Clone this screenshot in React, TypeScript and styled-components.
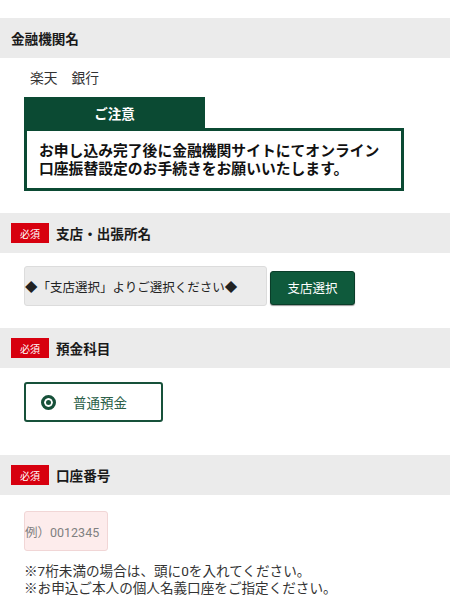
import styled, { createGlobalStyle } from 'styled-components';

const GlobalStyle = createGlobalStyle`
  body {
    margin: 0;
    background: #fff;
    font-family: Roboto, "Noto Sans CJK JP", sans-serif;
    color: #222;
  }
`;

export default function App() {
  return (
    <>
      <GlobalStyle />
      <Page>
        <SectionHead>
          <HeadTitle>金融機関名</HeadTitle>
        </SectionHead>
        <Body $top={13} $bottom={22}>
          <BankName>楽天　銀行</BankName>
          <Notice>
            <NoticeTab>ご注意</NoticeTab>
            <NoticeBox>
              <NoticeLine>お申し込み完了後に金融機関サイトにてオンライン</NoticeLine>
              <NoticeLine>口座振替設定のお手続きをお願いいたします。</NoticeLine>
            </NoticeBox>
          </Notice>
        </Body>

        <SectionHead>
          <Required>必須</Required>
          <HeadTitle>支店・出張所名</HeadTitle>
        </SectionHead>
        <Body $top={13} $bottom={22}>
          <BranchRow>
            <BranchField>◆「支店選択」よりご選択ください◆</BranchField>
            <BranchButton>支店選択</BranchButton>
          </BranchRow>
        </Body>

        <SectionHead>
          <Required>必須</Required>
          <HeadTitle>預金科目</HeadTitle>
        </SectionHead>
        <Body $top={14} $bottom={33}>
          <RadioBox>
            <RadioDot />
            <RadioLabel>普通預金</RadioLabel>
          </RadioBox>
        </Body>

        <SectionHead>
          <Required>必須</Required>
          <HeadTitle>口座番号</HeadTitle>
        </SectionHead>
        <Body $top={16} $bottom={12}>
          <AccountInput>例）0012345</AccountInput>
          <Notes>
            <NoteLine>※7桁未満の場合は、頭に0を入れてください。</NoteLine>
            <NoteLine>※お申込ご本人の個人名義口座をご指定ください。</NoteLine>
          </Notes>
        </Body>
      </Page>
    </>
  );
}

const Page = styled.div`
  padding-top: 18px;
  display: flex;
  flex-direction: column;
`;

const SectionHead = styled.div`
  height: 40px;
  background: #ebebeb;
  display: flex;
  align-items: center;
  gap: 7px;
  padding-left: 11px;
`;

const HeadTitle = styled.div`
  font-family: "Noto Sans CJK JP", sans-serif;
  font-size: 13.6px;
  font-weight: 700;
  color: #1a1a1a;
`;

const Required = styled.span`
  width: 38px;
  height: 20px;
  background: #d7000f;
  color: #fff;
  font-size: 10px;
  display: flex;
  align-items: center;
  justify-content: center;
`;

const Body = styled.div<{ $top: number; $bottom: number }>`
  padding: ${(p) => p.$top}px 24px ${(p) => p.$bottom}px;
`;

const BankName = styled.div`
  font-size: 13.8px;
  color: #333;
  padding-left: 6px;
  line-height: 14px;
`;

const Notice = styled.div`
  margin-top: 12px;
  width: 380px;
  display: flex;
  flex-direction: column;
`;

const NoticeTab = styled.div`
  width: 181px;
  height: 31px;
  background: #0b4a33;
  color: #fff;
  font-family: "Noto Sans CJK JP", sans-serif;
  font-size: 13.5px;
  font-weight: 700;
  display: flex;
  align-items: center;
  justify-content: center;
`;

const NoticeBox = styled.div`
  border: 3px solid #0b4a33;
  height: 57px;
  padding: 0 12px;
  display: flex;
  flex-direction: column;
  justify-content: center;
  font-family: Roboto, "Noto Sans CJK JP", sans-serif;
  font-size: 14.8px;
  font-weight: 700;
  color: #111;
`;

const NoticeLine = styled.div`
  line-height: 18px;
  white-space: nowrap;
`;

const BranchRow = styled.div`
  display: flex;
  align-items: center;
  gap: 3px;
`;

const BranchField = styled.div`
  width: 243px;
  height: 40px;
  box-sizing: border-box;
  background: #ebebeb;
  border: 1px solid #dcdcdc;
  border-radius: 3px;
  font-size: 12.5px;
  color: #222;
  display: flex;
  align-items: center;
  white-space: nowrap;
`;

const BranchButton = styled.button`
  width: 85px;
  height: 34px;
  margin-top: 3px;
  background: #0f5a3c;
  border: 1px solid #0a3d29;
  border-radius: 3px;
  color: #fff;
  font-family: inherit;
  font-size: 12.5px;
  box-shadow: 0 1px 1px rgba(0, 0, 0, 0.4);
`;

const RadioBox = styled.div`
  width: 139px;
  height: 40px;
  box-sizing: border-box;
  border: 2px solid #17513a;
  border-radius: 3px;
  display: flex;
  align-items: center;
  padding-left: 15px;
  gap: 17px;
`;

const RadioDot = styled.span`
  width: 15px;
  height: 15px;
  box-sizing: border-box;
  border-radius: 50%;
  border: 3px solid #17513a;
  background: #17513a;
  box-shadow: inset 0 0 0 2px #fff;
`;

const RadioLabel = styled.span`
  font-size: 13.5px;
  color: #2a5e47;
`;

const AccountInput = styled.div`
  width: 84px;
  height: 40px;
  box-sizing: border-box;
  background: #fdecec;
  border: 1px solid #f1d6d6;
  border-radius: 3px;
  font-size: 12.5px;
  color: #808080;
  display: flex;
  align-items: center;
  white-space: nowrap;
`;

const Notes = styled.div`
  margin-top: 12px;
  display: flex;
  flex-direction: column;
  font-size: 13.6px;
  color: #333;
`;

const NoteLine = styled.div`
  line-height: 16.5px;
  white-space: nowrap;
`;
